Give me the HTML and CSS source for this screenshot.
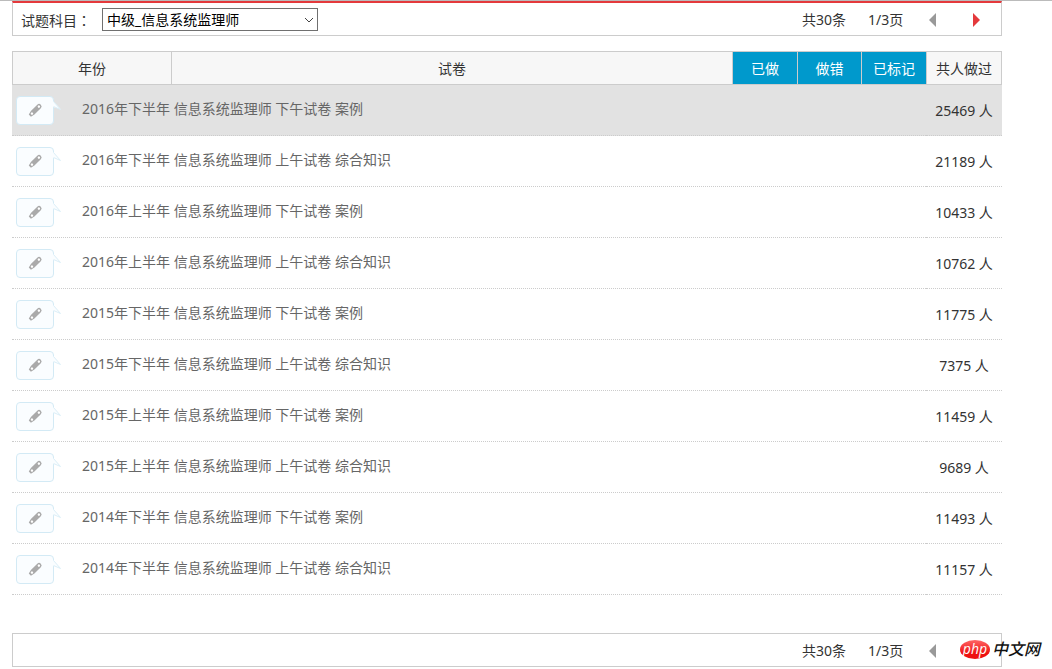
FILE: index.html
```html
<!DOCTYPE html>
<html lang="zh-CN">
<head>
<meta charset="utf-8">
<title>试题列表</title>
<link rel="stylesheet" href="styles.css">
</head>
<body>
<svg class="defs" aria-hidden="true">
  <symbol id="edit" viewBox="0 0 46 30">
    <rect x="0.5" y="0.5" width="37" height="28" rx="3.5" fill="#fafdff" stroke="#d3eaf5"/>
    <path d="M37 5L44.500 13L37 11Z" fill="#fafdff"/>
    <path d="M37.500 5.500L44.500 13.500L37.500 10.500" fill="none" stroke="#dceff8"/>
    <g transform="translate(19.500 14) rotate(-45)">
      <path d="M-4 -2.500H5Q7.500 -2.500 7.500 0Q7.500 2.500 5 2.500H-4L-8 1.500V-1.500Z" fill="#aaa"/>
      <circle cx="4.800" cy="0" r="1.200" fill="#fff"/>
      <circle cx="-5" cy="0" r="1.200" fill="#fff"/>
    </g>
  </symbol>
</svg>
<main class="page">
  <section class="bar bar-top">
    <label class="label" for="subject">试题科目<span class="colon" lang="zh-TW">：</span></label>
    <span class="picker">
      <select class="select" id="subject"><option>中级_信息系统监理师</option></select>
      <svg class="chevron" viewBox="0 0 10 6"><path d="M1 1L5 5L9 1" fill="none" stroke="#444"/></svg>
    </span>
    <nav class="pager">
      <span class="total">共30条</span><span class="current">1/3页</span>
      <button class="step" aria-label="上一页"><svg viewBox="0 0 8 14"><path d="M7 0V14L0 7Z" fill="#999"/></svg></button>
      <button class="step" aria-label="下一页"><svg viewBox="0 0 8 14"><path d="M0 0V14L7 7Z" fill="#e4393c"/></svg></button>
    </nav>
  </section>

  <table class="papers">
    <colgroup><col class="c-year"><col><col class="c-tab"><col class="c-mid"><col class="c-tab"><col class="c-count"></colgroup>
    <thead>
      <tr><th>年份</th><th>试卷</th><th class="blue"><button class="tab">已做</button></th><th class="blue"><button class="tab">做错</button></th><th class="blue"><button class="tab">已标记</button></th><th>共人做过</th></tr>
    </thead>
    <tbody>
      <tr class="active"><td colspan="5"><div class="paper"><svg class="edit"><use href="#edit"/></svg><a class="title" href="#">2016年下半年 信息系统监理师 下午试卷 案例</a></div></td><td class="count">25469 人</td></tr>
      <tr><td colspan="5"><div class="paper"><svg class="edit"><use href="#edit"/></svg><a class="title" href="#">2016年下半年 信息系统监理师 上午试卷 综合知识</a></div></td><td class="count">21189 人</td></tr>
      <tr><td colspan="5"><div class="paper"><svg class="edit"><use href="#edit"/></svg><a class="title" href="#">2016年上半年 信息系统监理师 下午试卷 案例</a></div></td><td class="count">10433 人</td></tr>
      <tr><td colspan="5"><div class="paper"><svg class="edit"><use href="#edit"/></svg><a class="title" href="#">2016年上半年 信息系统监理师 上午试卷 综合知识</a></div></td><td class="count">10762 人</td></tr>
      <tr><td colspan="5"><div class="paper"><svg class="edit"><use href="#edit"/></svg><a class="title" href="#">2015年下半年 信息系统监理师 下午试卷 案例</a></div></td><td class="count">11775 人</td></tr>
      <tr><td colspan="5"><div class="paper"><svg class="edit"><use href="#edit"/></svg><a class="title" href="#">2015年下半年 信息系统监理师 上午试卷 综合知识</a></div></td><td class="count">7375 人</td></tr>
      <tr><td colspan="5"><div class="paper"><svg class="edit"><use href="#edit"/></svg><a class="title" href="#">2015年上半年 信息系统监理师 下午试卷 案例</a></div></td><td class="count">11459 人</td></tr>
      <tr><td colspan="5"><div class="paper"><svg class="edit"><use href="#edit"/></svg><a class="title" href="#">2015年上半年 信息系统监理师 上午试卷 综合知识</a></div></td><td class="count">9689 人</td></tr>
      <tr><td colspan="5"><div class="paper"><svg class="edit"><use href="#edit"/></svg><a class="title" href="#">2014年下半年 信息系统监理师 下午试卷 案例</a></div></td><td class="count">11493 人</td></tr>
      <tr><td colspan="5"><div class="paper"><svg class="edit"><use href="#edit"/></svg><a class="title" href="#">2014年下半年 信息系统监理师 上午试卷 综合知识</a></div></td><td class="count">11157 人</td></tr>
    </tbody>
  </table>

  <section class="bar bar-bottom">
    <nav class="pager">
      <span class="total">共30条</span><span class="current">1/3页</span>
      <button class="step" aria-label="上一页"><svg viewBox="0 0 8 14"><path d="M7 0V14L0 7Z" fill="#999"/></svg></button>
      <span class="step"></span>
    </nav>
    <div class="mark"><span class="php">php</span><span class="cn">中文网</span></div>
  </section>
</main>
</body>
</html>
```
FILE: styles.css
```css
* { box-sizing: border-box; }
body {
  margin: 0;
  background: #fff;
  color: #333;
  font: 14px/20px "Noto Sans", "Noto Sans CJK SC", sans-serif;
}
button {
  border: 0;
  padding: 0;
  background: none;
  color: inherit;
  font: inherit;
}
.defs { position: absolute; width: 0; height: 0; }
.page {
  border-top: 1px solid #bbb;
  padding: 0 50px 0 12px;
}
.bar {
  display: flex;
  align-items: center;
  border: 1px solid #ccc;
  height: 34px;
}
.bar-top {
  height: 35px;
  border-top: 2px solid #e4393c;
  padding-left: 8px;
}
.label {
  width: 81px;
  padding-top: 2px;
}
.colon { font-family: "Noto Sans CJK TC", sans-serif; }
.picker { position: relative; display: flex; }
.select {
  appearance: none;
  width: 216px;
  height: 23px;
  border: 1px solid #707070;
  border-radius: 0;
  padding: 1px 4px 0;
  background: #fff;
  color: #000;
  font: inherit;
}
.chevron {
  position: absolute;
  right: 4px;
  top: 9px;
  width: 10px;
  height: 6px;
  pointer-events: none;
}
.pager {
  display: flex;
  align-items: center;
  margin-left: auto;
  padding: 2px 13px 0 0;
}
.total { width: 66px; }
.current { width: 53px; }
.step {
  display: flex;
  justify-content: center;
  width: 23px;
}
.step + .step { margin-left: 21px; }
.step svg { width: 8px; height: 14px; }

.papers {
  width: 100%;
  margin-top: 15px;
  border-spacing: 0;
  table-layout: fixed;
}
.c-year { width: 159px; }
.c-tab { width: 65px; }
.c-mid { width: 64px; }
.c-count { width: 76px; }
.papers th {
  height: 34px;
  padding: 2px 0 0;
  border: 1px solid #ccc;
  border-right: 0;
  background: #f7f7f7;
  font-weight: normal;
}
.papers th:last-child { border-right: 1px solid #ccc; }
.papers .blue { padding: 0; background: #09c; color: #fff; }
.tab { width: 100%; height: 32px; padding-top: 2px; }
.papers td {
  height: 51px;
  padding: 2px 0 0;
  border-bottom: 1px dotted #ccc;
}
.papers .active td { background: #e2e2e2; }
.paper { display: flex; padding-left: 4px; }
.edit { width: 46px; height: 30px; }
.title {
  margin-left: 20px;
  padding-top: 3px;
  color: #666;
  text-decoration: none;
}
.papers .count { text-align: center; }

.bar-bottom { position: relative; margin-top: 38px; }
.mark {
  position: absolute;
  right: -39px;
  top: 6px;
  display: flex;
  align-items: center;
  gap: 2px;
  line-height: 19px;
}
.php {
  width: 30px;
  height: 19px;
  border-radius: 50%;
  background: linear-gradient(#f66, #e11 70%);
  color: #fff;
  font: italic 14px/17px "Open Sans", sans-serif;
  text-align: center;
}
.cn {
  color: #111;
  font-size: 16px;
  font-style: italic;
  font-weight: 500;
}
```
